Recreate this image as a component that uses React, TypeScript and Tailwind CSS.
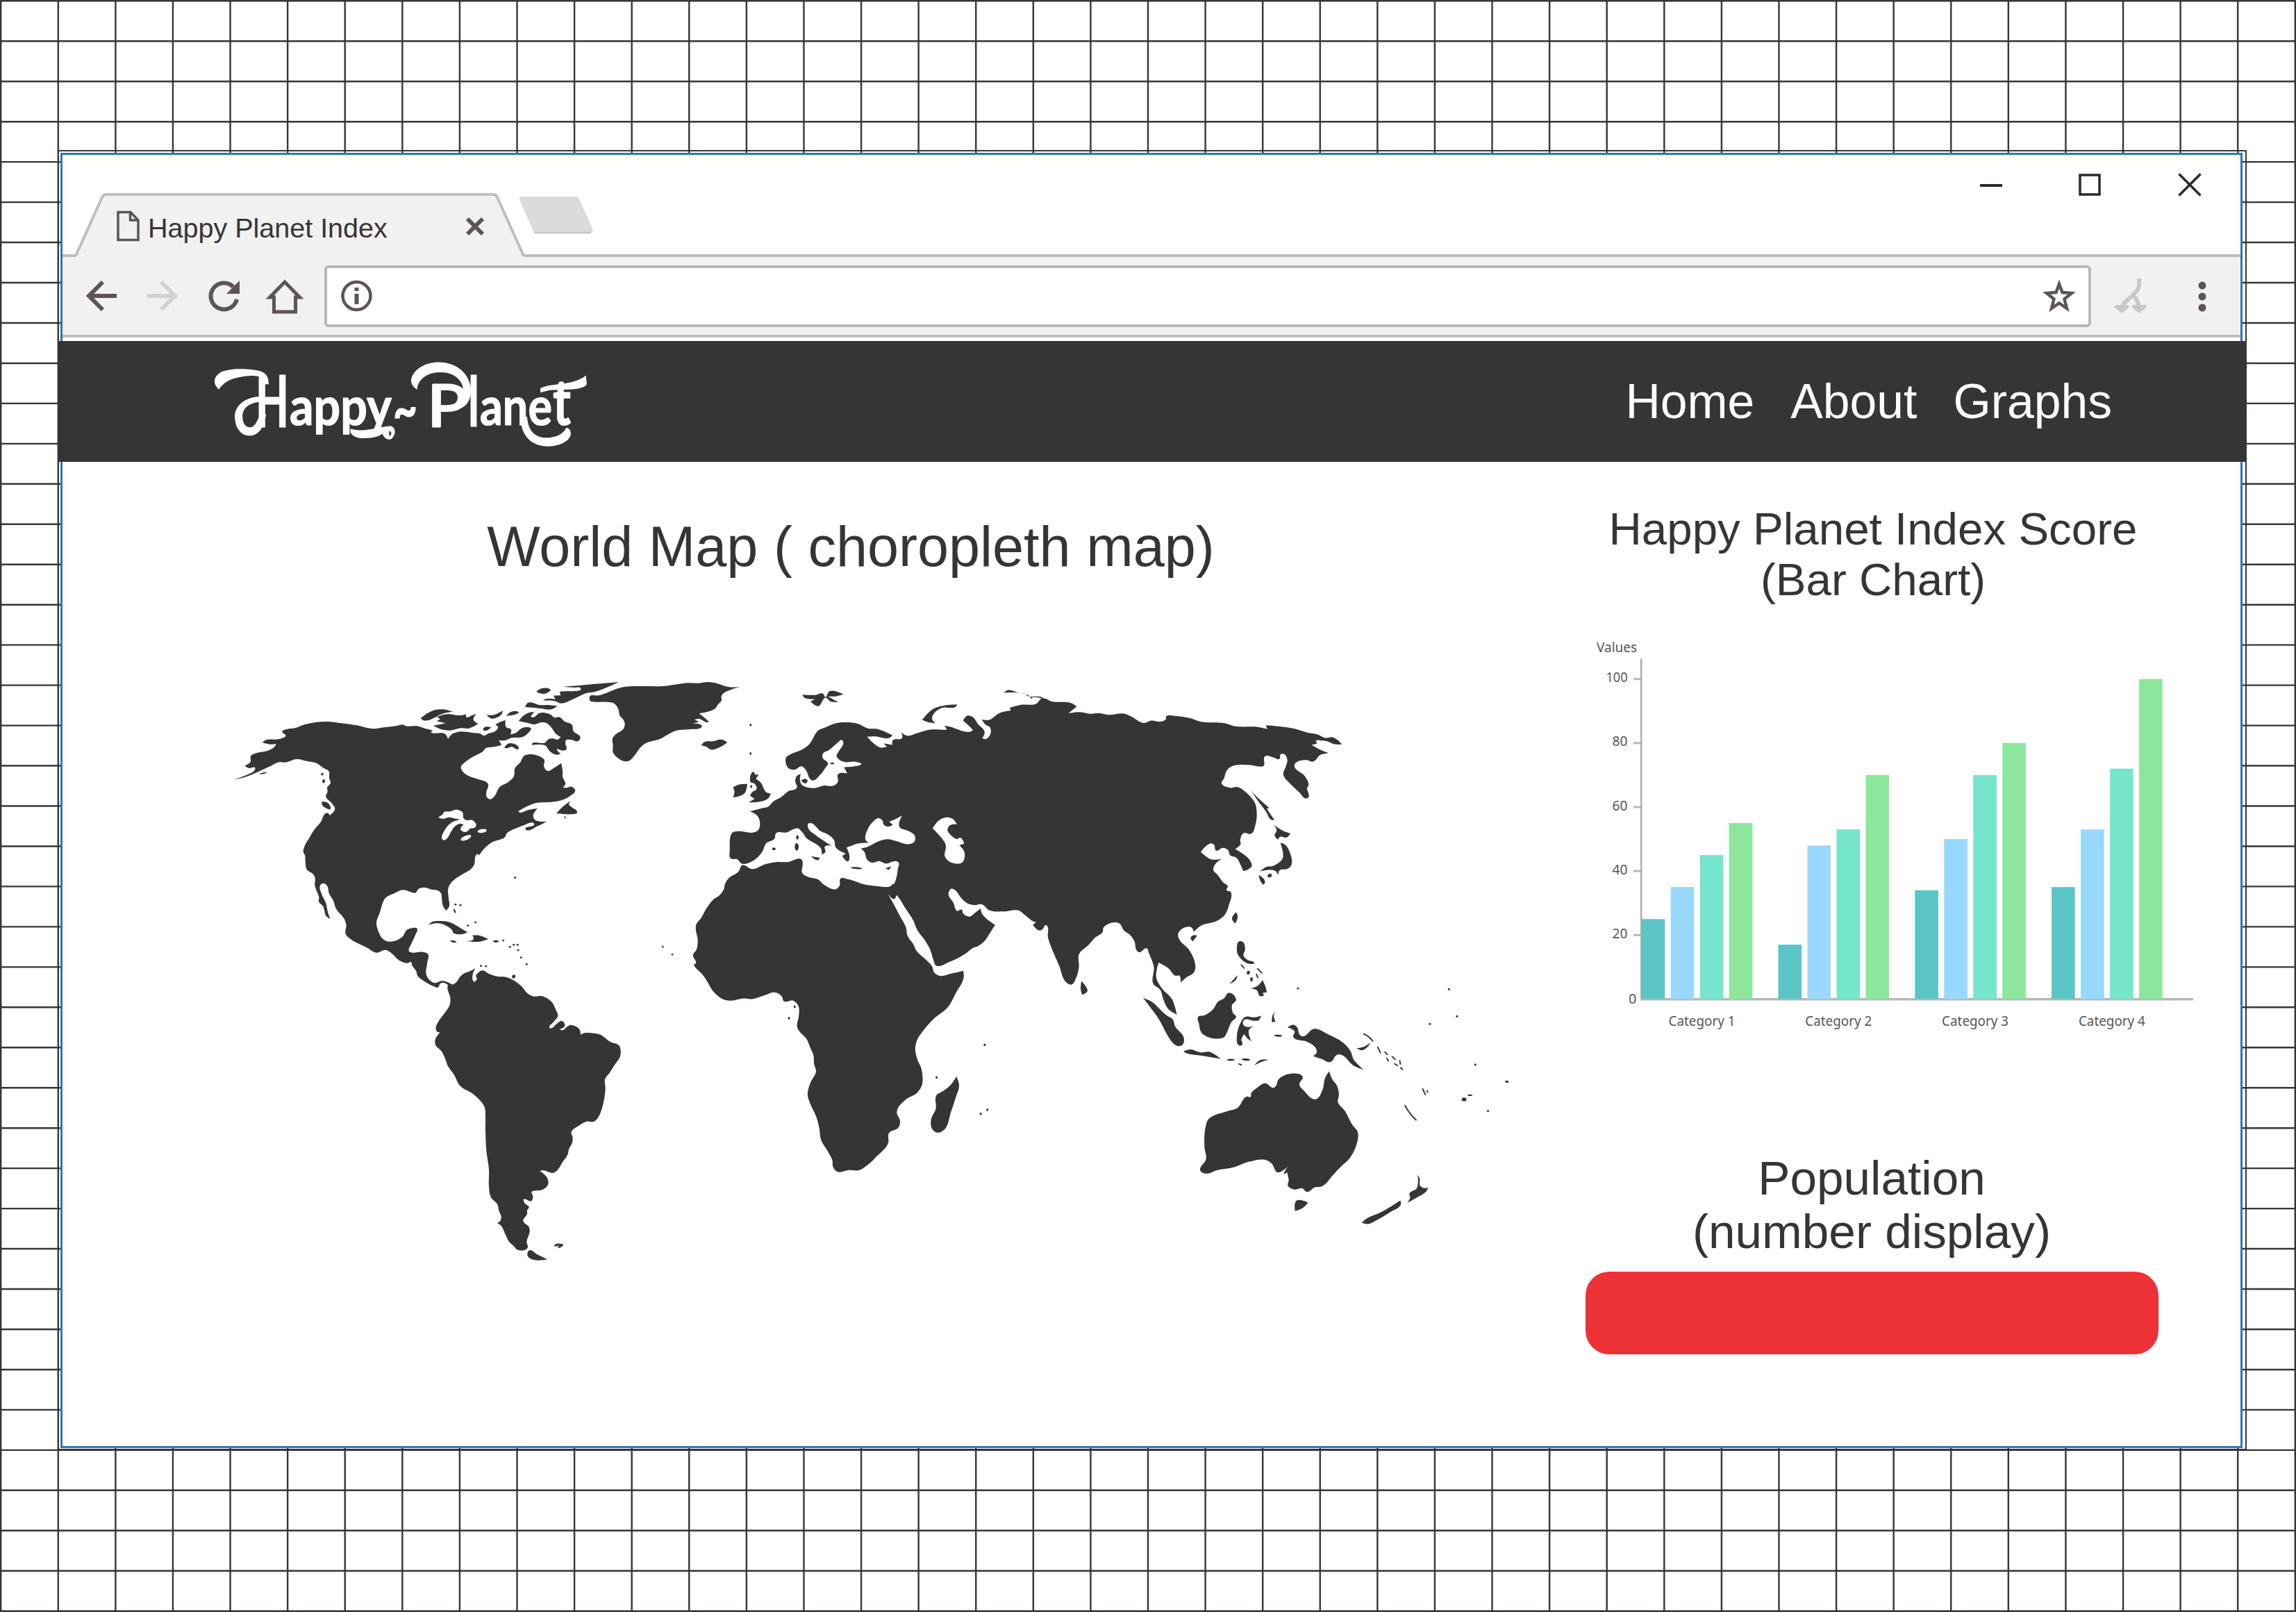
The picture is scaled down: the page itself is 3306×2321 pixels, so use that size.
import React from "react";

const INK = "#373435";

type Pt = [number, number];

function parse(s: string): Pt[] {
  return s
    .trim()
    .split(/\s+/)
    .map((p) => p.split(",").map(Number) as Pt);
}

// Closed outline through the given points: gentle bends are smoothed, sharp corners stay sharp.
function outline(s: string): string {
  const p = parse(s);
  const n = p.length;
  const tangent = p.map((c, i) => {
    const a = p[(i + n - 1) % n];
    const b = p[(i + 1) % n];
    const v1 = [c[0] - a[0], c[1] - a[1]];
    const v2 = [b[0] - c[0], b[1] - c[1]];
    const l1 = Math.hypot(v1[0], v1[1]) || 1;
    const l2 = Math.hypot(v2[0], v2[1]) || 1;
    const cos = (v1[0] * v2[0] + v1[1] * v2[1]) / (l1 * l2);
    if (cos < -0.1) return [0, 0];
    const ux = v1[0] / l1 + v2[0] / l2;
    const uy = v1[1] / l1 + v2[1] / l2;
    const lu = Math.hypot(ux, uy) || 1;
    return [ux / lu, uy / lu];
  });
  let d = `M${p[0][0]} ${p[0][1]}`;
  for (let i = 0; i < n; i++) {
    const j = (i + 1) % n;
    const a = p[i];
    const b = p[j];
    const k = Math.hypot(b[0] - a[0], b[1] - a[1]) / 3;
    d += `C${a[0] + tangent[i][0] * k} ${a[1] + tangent[i][1] * k} ${b[0] - tangent[j][0] * k} ${b[1] - tangent[j][1] * k} ${b[0]} ${b[1]}`;
  }
  return d + "Z";
}

type Region = {
  transform: string;
  land: string[];
  water?: string[];
  dots?: string;
  ovals?: number[][];
  waterOvals?: number[][];
  strokes?: string;
};

const REGIONS: Region[] = [
  {
    transform: "translate(300 960) scale(.39541 .33333)",
    land: [
      "91,488 130,472 170,444 168,434 150,438 133,428 153,412 155,385 175,373 215,363 240,347 247,334 225,335 197,328 210,316 245,314 268,309 282,298 269,280 285,270 315,265 350,250 390,240 435,237 480,243 540,253 600,268 640,262 690,254 708,250 718,256 760,256 790,267 818,275 809,283 820,287 860,289 873,312 885,293 910,281 940,281 965,286 990,289 1003,298 1020,288 1045,278 1055,262 1045,250 1060,240 1082,230 1085,262 1102,270 1100,292 1120,285 1140,266 1160,261 1175,266 1168,282 1145,303 1105,307 1080,318 1058,318 1068,338 1040,346 1010,352 1000,366 970,385 935,412 920,435 938,465 975,483 1018,505 1012,545 1015,565 1027,572 1040,562 1062,518 1090,500 1112,475 1117,437 1135,415 1150,385 1170,378 1200,384 1223,402 1222,430 1235,450 1260,436 1285,416 1290,450 1290,475 1300,507 1291,521 1305,523 1322,518 1336,535 1315,560 1275,580 1240,585 1195,588 1160,603 1128,625 1135,630 1160,620 1199,611 1183,640 1188,660 1205,668 1233,668 1200,688 1158,706 1155,698 1187,682 1182,674 1150,684 1110,703 1088,718 1078,738 1035,757 1005,785 985,815 981,808 974,815 968,855 955,875 920,900 888,928 874,955 875,1000 877,1035 866,1053 855,1035 850,1000 848,980 835,966 815,963 785,953 765,960 754,977 740,974 708,964 680,977 645,998 635,1020 625,1060 612,1105 620,1145 635,1175 655,1187 685,1182 708,1165 722,1138 745,1128 760,1131 755,1155 740,1195 731,1230 745,1235 780,1232 799,1240 797,1280 793,1325 803,1350 825,1366 850,1357 870,1362 886,1372 900,1400 875,1388 872,1375 860,1366 845,1368 836,1385 820,1380 795,1365 762,1335 757,1315 742,1290 737,1275 725,1280 695,1268 665,1235 645,1223 612,1235 580,1215 520,1178 500,1155 502,1115 495,1090 465,1045 455,1010 440,980 432,945 420,935 407,945 412,980 428,1020 435,1060 444,1090 428,1075 422,1050 418,1035 402,1015 403,995 395,970 388,945 388,910 378,892 360,878 353,840 352,815 346,800 352,770 365,745 385,705 410,670 425,635 435,632 442,642 455,628 461,612 450,590 428,560 434,540 433,520 445,503 440,480 438,450 420,438 390,415 360,408 322,399 280,413 258,412 225,430 170,460 130,478",
      "185,465 195,458 216,455 200,463",
      "413,583 430,585 445,605 444,617 430,612 415,598",
      "1267,634 1290,605 1320,578 1313,595 1325,608 1340,620 1343,630 1320,637 1290,636",
      "802,1115 815,1102 845,1098 880,1104 920,1130 944,1147 925,1155 892,1150 888,1138 860,1115 835,1108",
      "962,1160 985,1160 1020,1176 985,1188 937,1184 965,1178",
      "880,1183 895,1183 905,1190 890,1191",
    ],
    water: [
      "837,650 855,635 857,628 880,625 905,617 925,628 930,655 940,663 960,662 975,680 970,695 955,698 937,714 918,702 930,682 918,678 900,687 885,710 870,740 858,749 850,740 855,718 870,690 890,670 918,660 900,656 875,650 855,657",
    ],
    waterOvals: [
      [997, 709, 17, 8, -10],
      [938, 739, 21, 9, -28],
    ],
    ovals: [
      [415, 464, 4, 6, 20],
      [420, 494, 5, 8, 10],
      [1047, 1186, 10, 5, 0],
      [1112, 1338, 6, 8, 20],
      [1299, 650, 2, 6, 0],
      [897, 1055, 3, 10, -20],
    ],
    dots: "1074,1182 1112,1201 1126,1201 1098,1210 1128,1224 1139,1256 1159,1285 993,1292 1011,1294 1117,911 900,1027 918,1030 945,1118 973,1104",
  },
  {
    transform: "translate(560 960) scale(.33333)",
    land: [
      "138,222 165,202 200,186 235,184 275,194 240,200 150,232",
      "208,216 240,206 265,205 290,209 320,209 332,204 336,218 358,210 378,203 365,228 386,247 345,266 310,265 265,275 225,270 193,255 245,244 207,235 222,226",
      "407,268 422,259 442,262 428,273 410,275",
      "422,208 450,209 492,190 485,207 450,224 438,222",
      "507,212 525,196 550,192 563,197 540,208",
      "560,235 580,212 600,200 628,194 612,215 625,218 650,200 672,199 700,208 715,220 735,217 760,237 790,250 797,278 827,305 815,322 790,316 765,317 763,335 768,355 755,362 725,353 730,365 743,375 725,380 695,365 675,340 650,336 618,338 620,330 650,329 672,329 690,313 710,310 728,315 743,304 722,290 700,260 680,243 655,241 630,249 600,243",
      "498,350 515,332 540,333 560,348 558,356 530,346 510,352",
      "588,174 600,156 620,155 650,165 690,165 728,170 700,184 650,179",
      "748,87 850,78 993,66 940,90 890,108 850,115 800,138 743,158 715,148 664,146 675,140 720,140 711,125 742,124 738,108 760,106 800,105 828,100 828,92 800,90",
      "636,108 655,95 685,92 701,100 680,115 660,116",
      "868,128 905,124 940,113 975,98 1020,86 1100,84 1180,84 1230,78 1290,70 1340,71 1375,66 1415,71 1465,87 1517,88 1480,98 1445,115 1436,128 1437,145 1420,165 1410,180 1385,192 1340,202 1382,236 1375,240 1340,225 1320,228 1340,238 1315,245 1352,254 1350,262 1300,270 1240,276 1205,293 1170,312 1110,330 1085,350 1060,385 1040,405 1025,409 990,395 968,370 968,340 966,310 985,288 1012,270 1019,245 1010,225 998,213 990,180 970,157 935,152 890,152 870,148",
      "1348,340 1365,324 1400,322 1440,315 1462,327 1440,342 1390,358 1372,346",
    ],
    dots: "1183,1210 1224,1243",
  },
  {
    transform: "translate(580 1380) scale(.33333)",
    land: [
      "193,125 205,170 203,200 185,230 160,263 143,297 147,315 160,320 140,350 142,375 165,398 180,425 195,465 220,500 250,553 300,583 335,615 353,642 357,690 357,740 361,830 372,910 372,985 380,1030 410,1065 415,1090 425,1115 420,1135 407,1143 425,1155 440,1185 460,1225 480,1243 492,1257 525,1260 540,1247 535,1225 548,1180 545,1160 520,1133 537,1103 537,1088 545,1075 525,1055 521,1040 530,1040 555,1048 562,1028 557,1008 575,1003 605,998 628,975 622,945 592,918 605,915 650,926 670,912 690,880 713,845 717,825 732,795 733,770 728,750 760,722 795,704 825,705 845,685 865,630 875,565 874,520 895,492 915,460 938,425 941,395 933,375 895,360 855,330 825,323 785,322 768,330 765,310 750,295 725,288 708,296 690,310 677,305 695,298 700,285 685,270 668,280 638,302 633,297 650,275 670,248 660,220 645,190 620,170 595,162 565,164 540,152 515,122 480,95 445,80 405,77 370,65 345,52 325,62 316,75 320,90 308,102 301,90 303,65 313,42 290,55 262,66 245,82 232,102 213,113 200,110",
      "547,1261 580,1278 625,1300 585,1304 550,1296 538,1280",
      "652,1240 665,1232 693,1235 690,1242 675,1250 668,1250 675,1238 660,1244",
    ],
  },
  {
    transform: "translate(960 960) scale(.35714 .4847)",
    land: [
      "303,590 290,608 250,628 235,645 230,662 208,682 190,690 160,718 140,745 118,768 118,785 125,810 120,840 106,857 118,880 108,885 120,897 145,915 165,937 185,962 220,985 255,992 310,985 345,987 395,976 433,967 465,980 471,993 510,992 532,1010 533,1035 526,1070 565,1107 578,1130 592,1155 594,1180 602,1202 580,1235 568,1270 577,1295 602,1335 615,1370 622,1405 650,1440 668,1467 670,1485 688,1500 735,1495 775,1496 810,1480 850,1452 893,1415 895,1387 935,1368 941,1350 928,1322 965,1285 1010,1265 1030,1240 1027,1195 1010,1165 1002,1135 1010,1108 1035,1080 1075,1047 1135,1010 1165,970 1197,925 1196,903 1150,911 1100,918 1078,908 1070,890 1045,870 1008,845 995,825 970,798 965,775 940,740 915,705 890,672 918,690 925,680 930,660 917,645 900,653 850,652 790,645 730,631 700,630 697,650 680,661 635,648 610,632 570,624 545,610 548,590 545,574 490,580 440,580 400,586 345,601",
      "303,585 285,572 256,568 254,545 262,495 285,489 350,492 372,482 374,455 362,440 336,430 385,420 410,415 430,400 460,388 490,370 525,358 518,340 524,325 540,318 537,332 542,348 560,357 600,360 635,353 670,354 690,342 690,320 728,317 715,298 780,292 787,288 760,282 718,283 700,278 685,265 695,250 712,225 705,217 690,225 655,247 630,258 628,270 650,288 640,300 620,320 590,338 575,330 565,312 545,296 515,306 487,298 480,272 500,260 540,248 575,230 610,190 640,180 680,168 725,165 770,169 810,183 850,185 910,204 895,212 840,207 808,208 830,225 860,240 888,238 875,228 910,232 910,220 950,210 945,195 970,205 1010,197 1060,187 1128,188 1125,180 1100,174 1140,178 1225,193 1235,188 1222,178 1195,160 1210,146 1235,150 1255,170 1282,195 1272,212 1285,215 1305,200 1305,182 1285,172 1270,157 1300,158 1340,138 1388,130 1383,122 1430,113 1490,110 1512,95 1540,110 1540,740 1525,767 1515,780 1500,783 1476,767 1490,758 1480,757 1445,738 1420,724 1360,727 1300,723 1272,706 1240,708 1210,702 1185,685 1165,665 1145,660 1136,675 1155,700 1170,725 1190,722 1195,733 1222,742 1245,730 1266,718 1270,732 1324,767 1300,795 1285,812 1255,830 1235,835 1205,852 1140,877 1085,887 1075,870 1062,840 1040,812 1010,782 995,755 960,715 940,690 927,678 918,690 900,660 905,653 917,645 928,620 932,600 936,583 915,578 885,585 855,577 830,582 808,573 797,550 783,540 810,535 850,520 890,512 925,518 975,527 1000,518 1000,502 975,488 937,473 949,442 915,455 897,460 912,470 890,475 873,467 872,460 855,450 835,458 812,480 801,512 815,523 770,525 750,530 740,533 725,537 735,555 735,575 728,578 708,562 722,555 690,543 680,535 675,515 650,498 620,488 585,465 570,467 570,478 600,500 665,532 637,535 640,550 626,558 622,540 605,528 565,510 545,490 530,480 510,483 485,492 440,495 435,510 400,525 385,550 355,573",
      "542,338 560,333 568,338 562,346 550,344",
      "337,325 350,312 357,320 371,320 360,333 380,345 400,372 420,377 408,392 330,403 355,392 336,383 345,372 363,362 355,348 338,342",
      "267,358 290,350 325,348 315,375 268,388 273,370",
      "582,563 617,567 612,574",
      "882,598 905,593 895,603",
      "547,83 600,84 630,80 640,90 655,73 712,82 680,88 650,88 692,105 660,103 640,92 612,117 580,103 600,96 555,92",
      "1170,112 1120,115 1075,125 1048,142 1030,158 1055,165 1085,168 1070,155 1078,138 1110,122 1168,117",
      "1168,1217 1179,1243 1165,1280 1145,1325 1125,1370 1092,1384 1068,1370 1066,1345 1085,1312 1086,1275 1115,1260 1145,1242",
    ],
    water: [
      "1072,480 1095,458 1130,447 1155,453 1170,468 1140,472 1132,485 1145,500 1170,512 1185,508 1200,525 1180,530 1200,550 1198,575 1178,585 1122,565 1125,530 1100,502",
    ],
    ovals: [
      [667, 287, 8, 3, 0],
      [524, 535, 8, 11, 0],
      [527, 507, 5, 6, 0],
      [432, 541, 7, 4, 0],
      [765, 598, 23, 3, 3],
    ],
    dots: "338,173 338,258 1088,1220 1282,1123 1293,1316 1266,1328 516,1010 493,1044 341,356",
  },
  {
    transform: "translate(1400 960) scale(.35714)",
    land: [
      "285,128 320,140 400,147 421,160 387,188 435,183 475,190 510,187 550,194 610,189 640,200 693,227 720,217 760,221 780,212 782,200 815,198 880,208 920,221 1020,228 1060,240 1150,243 1190,251 1183,236 1240,241 1300,250 1350,265 1390,272 1425,287 1452,284 1475,297 1490,313 1460,312 1430,300 1385,296 1390,310 1368,315 1400,333 1437,348 1400,357 1385,375 1370,383 1348,376 1300,392 1300,405 1340,440 1356,478 1350,488 1356,525 1345,531 1320,508 1280,470 1254,435 1265,400 1270,375 1258,352 1243,353 1238,372 1215,366 1180,361 1174,400 1155,402 1120,396 1045,402 1025,420 1015,450 1005,470 1040,488 1070,485 1100,503 1140,550 1147,595 1142,635 1125,673 1093,671 1080,700 1082,715 1060,735 1115,775 1126,805 1093,824 1080,795 1065,770 1040,760 1030,738 1010,730 983,741 975,718 962,712 921,747 962,776 1006,775 980,795 972,820 990,840 1010,868 1030,885 1025,900 1042,908 1035,960 1018,1000 985,1025 920,1045 893,1069 885,1052 860,1050 830,1075 835,1100 875,1143 898,1195 895,1230 860,1255 840,1273 835,1245 820,1246 790,1215 752,1193 745,1215 742,1255 765,1297 805,1340 825,1403 790,1380 770,1340 758,1303 729,1277 732,1210 712,1155 703,1135 672,1151 660,1138 655,1110 635,1080 613,1065 590,1033 530,1050 525,1070 495,1092 470,1120 430,1160 430,1210 420,1250 400,1281 378,1272 350,1205 320,1135 305,1090 302,1045 292,1041 270,1030 235,980 235,180 270,150",
      "127,105 145,94 185,104 215,110 220,116 285,125 290,132 240,125 237,133 232,119",
      "1124,500 1145,522 1198,570 1187,572 1218,618 1205,617 1185,585 1150,538",
      "1217,638 1250,660 1283,672 1268,688 1240,686 1233,698 1219,680 1227,660",
      "1242,710 1262,718 1279,745 1287,798 1270,815 1240,820 1233,840 1222,823 1160,825 1185,807 1215,802 1250,775 1253,755",
      "1155,840 1175,855 1180,870 1172,879 1160,860",
      "1063,990 1069,1000 1066,1025 1059,1035 1047,1015",
      "880,1095 890,1083 907,1083 890,1107",
      "440,1268 455,1285 464,1308 443,1322 437,1300",
    ],
    ovals: [[1199, 842, 9, 7, -30]],
  },
  {
    transform: "translate(1600 1200) scale(.38265)",
    land: [
      "480,407 495,408 504,435 498,460 515,477 537,485 537,491 510,488 475,452 473,438",
      "523,583 550,574 570,552 580,575 586,598 570,600 575,610 560,612 548,590",
      "445,567 475,533 470,550",
      "120,619 150,632 205,682 232,700 240,725 272,765 272,790 260,800 240,795 215,765 180,700",
      "327,690 350,685 385,660 400,635 425,620 443,600 470,625 455,645 458,675 470,690 452,710 435,750 422,768 343,753 330,715",
      "565,686 555,703 540,705 500,702 497,720 510,728 537,725 518,740 528,782 512,770 500,755 490,775 493,795 480,797 473,762 488,710 505,690 540,692",
      "272,820 300,813 335,824 370,822 412,848 340,836 285,828",
      "538,873 560,853 592,852 570,858",
      "620,670 612,685 618,708 605,710 607,685",
      "663,730 685,720 700,730 708,755 720,764 764,735 820,758 870,785 900,818 912,850 950,889 910,872 870,835 850,833 825,860 790,848 760,838 773,825 768,805 740,785 685,766 690,745",
      "924,808 950,803 975,787 965,803 943,816",
      "820,895 832,925 850,950 857,985 853,1010 880,1045 905,1093 928,1125 920,1180 895,1225 865,1253 835,1285 795,1327 765,1332 737,1349 718,1335 690,1340 665,1325 668,1305 662,1275 648,1283 655,1268 665,1253 626,1275 605,1243 580,1228 520,1235 455,1258 400,1267 358,1280 335,1268 357,1225 351,1180 356,1100 368,1073 430,1047 475,1033 510,990 524,992 527,977 545,960 580,940 610,957 620,950 630,925 685,903 720,915 708,945 725,968 770,1000 795,965 805,920",
      "697,1382 741,1389 720,1410 692,1421",
      "943,1465 960,1450 1020,1423 1088,1381 1090,1396 1050,1425 1000,1455 965,1470",
      "1153,1283 1161,1300 1162,1325 1180,1335 1192,1332 1187,1345 1150,1370 1115,1389 1125,1370 1122,1355 1150,1335",
    ],
    ovals: [
      [516, 524, 6, 7, 20],
      [528, 549, 5, 8, 0],
      [450, 852, 15, 4, 0],
      [507, 851, 16, 4, 3],
      [485, 869, 8, 3, 20],
      [628, 761, 15, 4, 3],
      [1328, 1001, 9, 7, 0],
      [1350, 985, 9, 3, 0],
      [1489, 934, 7, 4, 0],
    ],
    strokes:
      "M551 509L567 525M547 530L551 542M490 495L500 507M950 754Q970 762 984 781M1003 804L1013 825M1030 823L1039 832M1037 846L1043 856M1058 840L1068 850M1067 867L1077 873M1086 855L1088 868M1090 882L1096 888M1172 961L1182 983M1190 968L1190 974M1106 1024Q1118 1050 1147 1078",
    dots: "703,583 1271,586 1301,688 1199,717 1370,870 1418,1044",
  },
];

function WorldMap() {
  return (
    <svg className="block h-[900px] w-[1928px]" viewBox="260 960 1928 900" fill={INK}>
      {REGIONS.map((r, i) => (
        <g key={i} transform={r.transform}>
          {r.land.map((s, k) => (
            <path key={k} d={outline(s)} />
          ))}
          {r.water?.map((s, k) => (
            <path key={k} d={outline(s)} fill="#fff" />
          ))}
          {r.waterOvals?.map(([x, y, a, b, t], k) => (
            <ellipse key={k} rx={a} ry={b} transform={`translate(${x} ${y}) rotate(${t})`} fill="#fff" />
          ))}
          {r.ovals?.map(([x, y, a, b, t], k) => (
            <ellipse key={k} rx={a} ry={b} transform={`translate(${x} ${y}) rotate(${t})`} />
          ))}
          {r.dots && parse(r.dots).map(([x, y], k) => <ellipse key={k} cx={x} cy={y} rx="4" ry="4" />)}
          {r.strokes && <path d={r.strokes} fill="none" stroke={INK} strokeWidth="5" strokeLinecap="round" />}
        </g>
      ))}
    </svg>
  );
}

const GROUPS = [
  [25, 35, 45, 55],
  [17, 48, 53, 70],
  [34, 50, 70, 80],
  [35, 53, 72, 100],
];
const BAR_COLORS = ["#5bc5c5", "#98d8ff", "#75e5cc", "#8ce79c"];

function BarChart() {
  const base = 1438.5;
  const unit = 4.608;
  return (
    <svg
      className="mt-[39px] block h-[580px] w-[922px]"
      viewBox="2236 910 922 580"
      fontFamily="'Noto Sans', sans-serif"
      fontSize="20"
      fill="#555"
    >
      <text x="2299" y="939" textLength="58" lengthAdjust="spacingAndGlyphs">Values</text>
      {[20, 40, 60, 80, 100].map((v) => (
        <g key={v}>
          <rect x="2352" y={base - v * unit - 1.5} width="11" height="3" fill="#bababa" />
          <text x="2343.5" y={base - v * unit + 4.5} textAnchor="end" textLength={v === 100 ? 31 : 22} lengthAdjust="spacingAndGlyphs">
            {v}
          </text>
        </g>
      ))}
      <text x="2356.500" y="1444.5" textAnchor="end">0</text>
      <rect x="2362" y="948.5" width="2.5" height="490" fill="#a9a9a9" />
      <rect x="2362" y="1437" width="796" height="3.5" fill="#b8b8b8" />
      {GROUPS.map((g, i) => (
        <g key={i}>
          {g.map((v, k) => (
            <rect
              key={k}
              x={2363.7 + i * 196.8 + k * 42}
              y={base - v * unit}
              width="33.6"
              height={v * unit}
              fill={BAR_COLORS[k]}
            />
          ))}
          <text x={2402.5 + i * 196.8} y="1476.5" textLength="96" lengthAdjust="spacingAndGlyphs">
            {`Category ${i + 1}`}
          </text>
        </g>
      ))}
    </svg>
  );
}

function GridBackdrop() {
  const lines = Array.from({ length: 41 }, (_, i) => i);
  return (
    <svg className="absolute inset-0 h-[2321px] w-[3306px]" viewBox="0 0 3306 2321" stroke={INK} strokeWidth="2.4">
      {lines.map((i) => (
        <g key={i}>
          <line x1={1.2 + i * 82.59} x2={1.2 + i * 82.59} y1="0" y2="2321" />
          <line x1="0" x2="3306" y1={1.3 + i * 57.96} y2={1.3 + i * 57.96} />
        </g>
      ))}
    </svg>
  );
}

function Logo() {
  return (
    <svg className="ml-[207px] block h-[174px] w-[580px]" viewBox="290 491 580 174" fill="#fff">
      <text fontFamily="Lato, sans-serif" fontWeight="700" stroke="#fff" strokeWidth="1.2" strokeLinejoin="round">
        <tspan x="368" y="615" fontSize="104" textLength="48" lengthAdjust="spacingAndGlyphs">H</tspan>
        <tspan x="417" y="612" fontSize="77" textLength="147" lengthAdjust="spacingAndGlyphs">appy</tspan>
        <tspan x="566" y="618" fontSize="80" textLength="35" lengthAdjust="spacingAndGlyphs">~</tspan>
        <tspan x="615" y="614" fontSize="84" fontWeight="400" strokeWidth="3" textLength="58" lengthAdjust="spacingAndGlyphs">P</tspan>
        <tspan x="674" y="614" fontSize="100" textLength="16" lengthAdjust="spacingAndGlyphs">l</tspan>
        <tspan x="691" y="612" fontSize="77" textLength="104" lengthAdjust="spacingAndGlyphs">ane</tspan>
        <tspan x="796" y="612" fontSize="92" textLength="26" lengthAdjust="spacingAndGlyphs">t</tspan>
      </text>
      {/* Decorative swashes */}
      <g transform="translate(290 500) scale(.3699 .3333)">
        <path d="M68 182C45 160 45 130 72 110C112 85 200 94 232 104C252 112 262 128 262 160H232V132C222 118 170 122 145 130C108 138 85 155 68 182Z" />
        <path d="M240 212C170 212 130 250 130 300C130 345 152 382 188 382C228 382 245 335 252 290L230 280C218 325 205 346 190 346C172 346 160 328 160 300C160 262 185 238 240 235Z" />
        <path d="M840 183C805 160 810 120 850 88C900 52 975 58 1018 105C1040 130 1050 165 1049 190C1048 220 1038 245 1022 256C1002 274 955 274 928 250C975 252 1020 245 1020 188C1018 148 990 108 930 108C875 108 840 145 840 183Z" />
        <path d="M1240 300C1245 380 1280 428 1350 428C1400 428 1440 400 1438 370C1436 352 1425 347 1420 348C1405 380 1375 391 1340 391C1290 388 1270 350 1268 300Z" />
        <path fillRule="evenodd" d="M581 352C575 370 590 393 630 393C670 392 690 385 705 374C712 395 728 402 740 396C760 375 756 345 736 340L700 345C660 355 620 365 581 352ZM730 362C742 362 742 380 732 384Z" />
        <path d="M1320 196L1319 178C1365 150 1440 170 1497 122L1500 160C1485 190 1400 180 1350 187Z" />
      </g>
    </svg>
  );
}

const ICON = "#5d5457";

function TabStrip() {
  return (
    <div className="flex h-[143px] justify-between">
      <div className="flex self-end">
        <div className="relative z-10 -mb-1 h-[92px] w-[667px]">
          <svg className="absolute inset-0 h-[92px] w-[667px]" viewBox="90 278 667 92">
            <path d="M90 372V368.3H107Q110 368 111 364L147 284Q149 280 152 280H711Q714 280 716 284L752 364Q753 368.3 757 368.3V372Z" fill="#f1f1f1" />
            <path d="M90 368.3H107Q110 368 111 364L147 284Q149 280 152 280H711Q714 280 716 284L752 364Q753 368.3 757 368.3" fill="none" stroke="#bdc0bf" strokeWidth="4" />
          </svg>
          <div className="relative flex">
            <svg className="mt-6 ml-[77px] h-[46px] w-[36px]" viewBox="167 302 36 46" fill="none" stroke={ICON} strokeWidth="3.500">
              <path d="M170 305.500H188L199 317V345.500H170Z" />
              <path d="M187.500 305.500V317H199" />
            </svg>
            <span className="mt-[30px] ml-[10px] w-[360px] text-[39.5px] leading-[40px] whitespace-nowrap">Happy Planet Index</span>
            <svg className="mt-[33px] ml-[96px] h-[30px] w-[30px]" viewBox="0 0 30 30" stroke={ICON} strokeWidth="6">
              <path d="M4 4L26 26M26 4L4 26" />
            </svg>
          </div>
        </div>
        <svg className="-ml-[9px] h-[70px] w-[108px]" viewBox="748 296 108 70">
          <path d="M751 301H828Q832 301 834 305L853 347Q855 352 850 353H773Q769 353 767 349L748 305Q747 301 751 301Z" fill="#dbdbd9" />
          <path d="M769 353H851" stroke="#c3c6c5" strokeWidth="2.500" />
        </svg>
      </div>
      <div className="mt-[25px] mr-[55px] flex gap-[107px]">
        <svg className="h-9 w-9" viewBox="0 0 36 36" stroke="#2b2630" strokeWidth="4">
          <path d="M2 19H34" />
        </svg>
        <svg className="h-9 w-9" viewBox="0 0 36 36" fill="none" stroke="#2b2630" strokeWidth="3.500">
          <path d="M3 4H31V32H3Z" />
        </svg>
        <svg className="h-9 w-9" viewBox="0 0 36 36" stroke="#2b2630" strokeWidth="3.500">
          <path d="M2.500 2.500L33.500 33.500M33.500 2.500L2.500 33.500" />
        </svg>
      </div>
    </div>
  );
}

function Toolbar() {
  return (
    <div className="flex h-[120px] items-center border-y-4 border-[#bcbfbe] bg-[#f1f1f1]">
      <div className="flex gap-10 pl-8">
        <svg className="h-12 w-12" viewBox="0 0 48 48" fill="none" stroke={ICON} strokeWidth="6">
          <path d="M46 24H6M26 4L6 24L26 44" />
        </svg>
        <svg className="h-12 w-12" viewBox="0 0 48 48" fill="none" stroke="#d0d2d2" strokeWidth="6">
          <path d="M2 24H42M22 4L42 24L22 44" />
        </svg>
        <svg className="h-12 w-12" viewBox="0 0 48 48" fill="none" stroke={ICON} strokeWidth="6">
          <path d="M38 11A19 19 0 1 0 43 29" />
          <path d="M47 2V21H28Z" fill={ICON} stroke="none" />
        </svg>
        <svg className="h-12 w-12 overflow-visible" viewBox="0 0 48 48" fill="none" stroke={ICON}>
          <path d="M24 4L2.500 26H8.500V47H39.500V26H45.500Z" strokeWidth="5" />
        </svg>
      </div>
      <div className="ml-[33px] flex h-[89px] w-[2544px] items-center justify-between rounded-md border-4 border-[#b7b9b9] bg-white">
        <svg className="ml-[18px] h-12 w-12" viewBox="0 0 48 48" fill="none" stroke={ICON}>
          <circle cx="24.500" cy="24" r="20" strokeWidth="4.500" />
          <path d="M24.500 21V36M24.500 12V17" strokeWidth="6" />
        </svg>
        <svg className="mr-[18px] h-12 w-12" viewBox="0 0 48 48" fill="none" stroke={ICON} strokeWidth="4.500">
          <path d="M24 7L28.500 19L42 20L31.500 28.500L35 42L24 34.500L13 42L16.500 28.500L6 20L19.500 19Z" />
        </svg>
      </div>
      <svg className="ml-[33px] h-[52px] w-12" viewBox="0 0 48 52" fill="none" stroke="#c6c8c8" strokeWidth="6">
        <path d="M36 1V11Q35 17 30 22L16 35Q12 39 12 44M27 25Q35 32 36 44" />
        <path d="M1 39H21V43L11 51L1 43ZM26 39H46V43L36 51L26 43Z" fill="#c6c8c8" stroke="none" />
      </svg>
      <svg className="ml-[55px] h-12 w-12" viewBox="0 0 48 48" fill={ICON}>
        <circle cx="24" cy="9" r="5.500" />
        <circle cx="24" cy="25" r="5.500" />
        <circle cx="24" cy="41" r="5.500" />
      </svg>
    </div>
  );
}

export default function App() {
  return (
    <div className="relative h-[2321px] w-[3306px] overflow-hidden bg-white font-['Liberation_Sans',Arial,sans-serif] text-[#373435]">
      <GridBackdrop />
      <div className="relative flow-root">
        <div className="mt-[216px] ml-[83px] h-[1872px] w-[3152px] border-2 border-[#373435] pt-[2px] pr-1 pb-px pl-[2px]">
          <div className="h-[1865px] w-[3142px] border-[3px] border-[#2b78b3] bg-white">
            <TabStrip />
            <Toolbar />
            <header className="mt-[5px] -mr-[9px] -ml-[7px] flex h-[174px] items-center justify-between bg-[#373435] text-white">
              <Logo />
              <nav className="mr-[194px] flex gap-[52px] text-[69.7px] leading-[80px]">
                <a>Home</a>
                <a>About</a>
                <a>Graphs</a>
              </nav>
            </header>
            <main className="flex gap-12 pl-[171px]">
              <section className="w-[1928px] pt-[82px]">
                <h1 className="text-center text-[81px] leading-[80px] whitespace-nowrap">World Map ( choropleth map)</h1>
                <div className="mt-[133px] -ml-px">
                  <WorldMap />
                </div>
              </section>
              <section className="-ml-px flex w-[922px] flex-col pt-[61px]">
                <h2 className="text-center text-[65.5px] leading-[72.5px]">
                  Happy Planet Index Score
                  <br />
                  (Bar Chart)
                </h2>
                <BarChart />
                <h2 className="mt-[168px] mr-1 text-center text-[69.3px] leading-[76.7px]">
                  Population
                  <br />
                  (number display)
                </h2>
                <div className="mt-5 ml-[47px] h-[119px] w-[825px] rounded-[34px] bg-[#ed3237]" />
              </section>
            </main>
          </div>
        </div>
      </div>
    </div>
  );
}
